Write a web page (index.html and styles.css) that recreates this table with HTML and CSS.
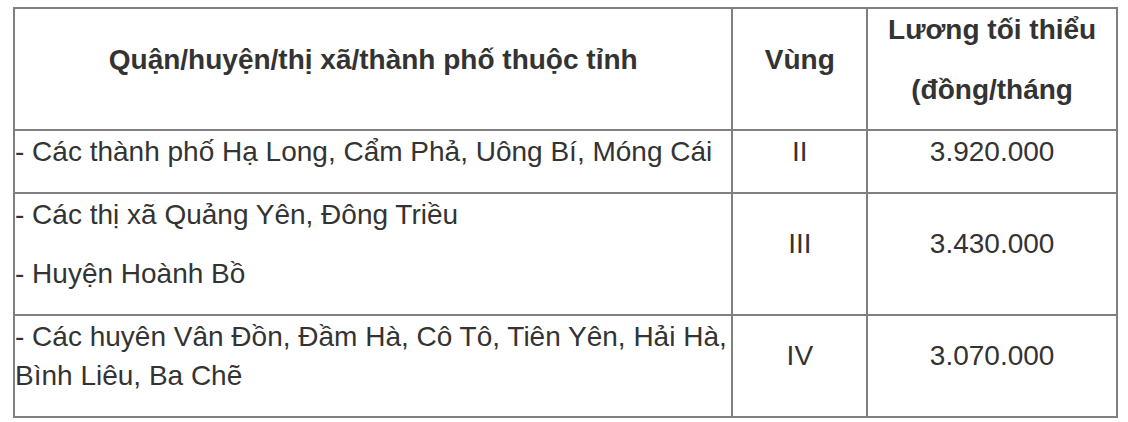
FILE: index.html
```html
<!DOCTYPE html>
<html lang="vi">
<head>
<meta charset="utf-8">
<title>Lương tối thiểu vùng</title>
<link rel="stylesheet" href="styles.css">
</head>
<body>
<table class="wage-table">
  <colgroup>
    <col class="col-area">
    <col class="col-zone">
    <col class="col-wage">
  </colgroup>
  <thead>
    <tr>
      <th><p>Quận/huyện/thị xã/thành phố thuộc tỉnh</p></th>
      <th><p>Vùng</p></th>
      <th><p>Lương tối thiểu</p><p>(đồng/tháng</p></th>
    </tr>
  </thead>
  <tbody>
    <tr>
      <td class="area"><p>- Các thành phố Hạ Long, Cẩm Phả, Uông Bí, Móng Cái</p></td>
      <td class="center"><p>II</p></td>
      <td class="center"><p>3.920.000</p></td>
    </tr>
    <tr>
      <td class="area"><p>- Các thị xã Quảng Yên, Đông Triều</p><p>- Huyện Hoành Bồ</p></td>
      <td class="center"><p>III</p></td>
      <td class="center"><p>3.430.000</p></td>
    </tr>
    <tr>
      <td class="area"><p>- Các huyên Vân Đồn, Đầm Hà, Cô Tô, Tiên Yên, Hải Hà, Bình Liêu, Ba Chẽ</p></td>
      <td class="center"><p>IV</p></td>
      <td class="center"><p>3.070.000</p></td>
    </tr>
  </tbody>
</table>
</body>
</html>
```
FILE: styles.css
```css
html, body {
  background: #ffffff;
}
body {
  margin: 0;
  padding: 7px 0 0 13px;
}
.wage-table {
  border-collapse: collapse;
  width: 1105px;
  font-family: "Liberation Sans", Arial, Helvetica, sans-serif;
  font-size: 28px;
  line-height: 39.5px;
  color: #333333;
}
.col-area { width: 720px; }
.col-zone { width: 135px; }
.col-wage { width: 250px; }
.wage-table th,
.wage-table td {
  border: 2px solid #808080;
  padding: 1px 1px 0 1px;
  vertical-align: middle;
  text-align: center;
}
.wage-table th {
  font-weight: bold;
}
.wage-table td.area {
  text-align: left;
  padding-left: 0;
}
.wage-table p {
  margin: 0 0 20px 0;
}
```
